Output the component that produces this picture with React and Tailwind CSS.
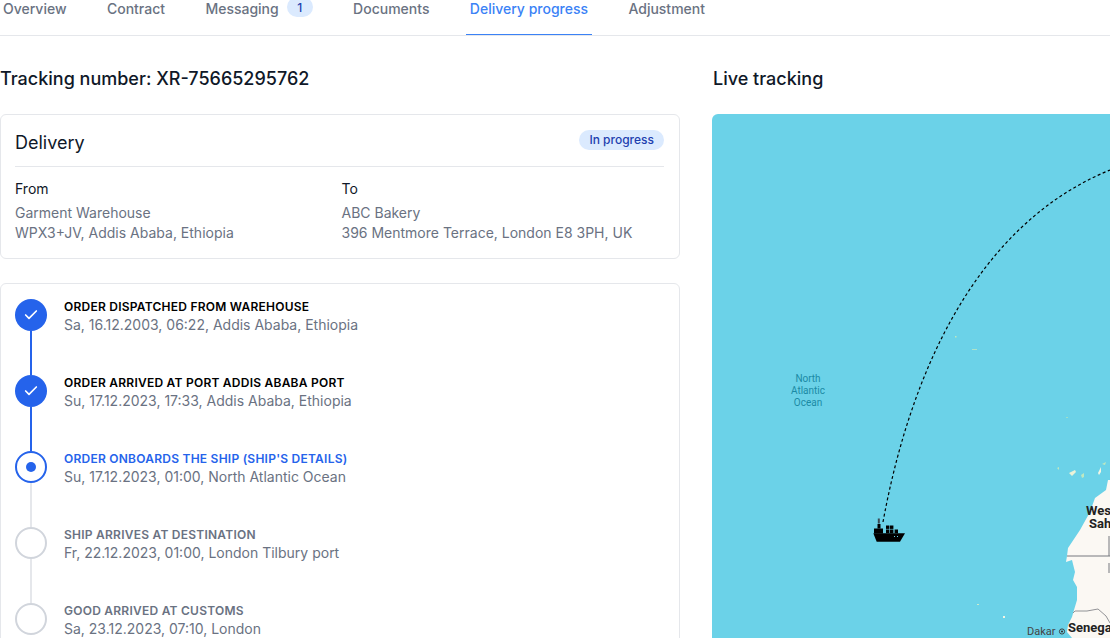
import { Check } from "lucide-react";

const tabs = ["Overview", "Contract", "Messaging", "Documents", "Delivery progress", "Adjustment"];

const steps = [
  { title: "ORDER DISPATCHED FROM WAREHOUSE", sub: "Sa, 16.12.2003, 06:22, Addis Ababa, Ethiopia", state: "done" },
  { title: "ORDER ARRIVED AT PORT ADDIS ABABA PORT", sub: "Su, 17.12.2023, 17:33, Addis Ababa, Ethiopia", state: "done" },
  { title: "ORDER ONBOARDS THE SHIP (SHIP'S DETAILS)", sub: "Su, 17.12.2023, 01:00, North Atlantic Ocean", state: "current" },
  { title: "SHIP ARRIVES AT DESTINATION", sub: "Fr, 22.12.2023, 01:00, London Tilbury port", state: "todo" },
  { title: "GOOD ARRIVED AT CUSTOMS", sub: "Sa, 23.12.2023, 07:10, London", state: "todo" },
];

function Tabs() {
  return (
    <div className="flex h-9 gap-[32.4px] border-b border-gray-200 -ml-px w-[1111px] overflow-hidden">
      {tabs.map((t) => {
        const active = t === "Delivery progress";
        return (
          <div key={t} className={active ? "flex gap-2 px-1 -mt-px h-[37px] border-b-2 border-[#3b82f6] text-sm leading-5 font-medium text-[#3b82f6]" : "flex gap-2 px-1 -mt-px h-[37px] text-sm leading-5 font-medium text-gray-500"}>
            <span>{t}</span>
            {t === "Messaging" && (
              <span className="h-5 rounded-full bg-[#dbeafe] px-[10.5px] text-xs leading-[22px] text-[#1e40af] -mt-0.5">1</span>
            )}
          </div>
        );
      })}
    </div>
  );
}

function StepIcon({ state }) {
  if (state === "done") {
    return (
      <div className="flex size-8 shrink-0 items-center justify-center rounded-full bg-[#2563eb]">
        <Check className="size-4 text-white" strokeWidth={2.5} />
      </div>
    );
  }
  if (state === "current") {
    return (
      <div className="flex size-8 shrink-0 items-center justify-center rounded-full border-2 border-[#2563eb] bg-white">
        <div className="size-2.5 rounded-full bg-[#2563eb]" />
      </div>
    );
  }
  return <div className="size-8 shrink-0 rounded-full border-2 border-gray-300 bg-white" />;
}

function Step({ step, last }) {
  const titleColor = step.state === "done" ? "text-black" : step.state === "current" ? "text-[#2563eb]" : "text-gray-500";
  return (
    <div className="flex h-[76px] gap-[17px]">
      <div className="flex w-8 shrink-0 flex-col items-center">
        <StepIcon state={step.state} />
        {!last && <div className={step.state === "done" ? "w-0.5 flex-1 bg-[#2563eb]" : "w-0.5 flex-1 bg-gray-200"} />}
      </div>
      <div>
        <div className={"text-xs leading-4 font-semibold tracking-[0.02em] " + titleColor}>{step.title}</div>
        <div className="text-sm leading-5 text-gray-500">{step.sub}</div>
      </div>
    </div>
  );
}

function Delivery() {
  return (
    <div className="mt-[21px] h-[145px] rounded-md border border-gray-200 pl-3.5 pr-[15px]">
      <div className="flex h-[52px] items-center justify-between border-b border-gray-200">
        <h3 className="mt-1 text-lg">Delivery</h3>
        <span className="-mt-0.5 rounded-full bg-[#dbeafe] px-2.5 text-xs leading-5 font-medium text-[#1e40af]">In progress</span>
      </div>
      <div className="mt-3 grid grid-cols-[326.5px_1fr] text-sm leading-5">
        <div>
          <div className="mb-1 text-gray-900">From</div>
          <div className="text-gray-500">Garment Warehouse</div>
          <div className="text-gray-500">WPX3+JV, Addis Ababa, Ethiopia</div>
        </div>
        <div>
          <div className="mb-1 text-gray-900">To</div>
          <div className="text-gray-500">ABC Bakery</div>
          <div className="text-gray-500">396 Mentmore Terrace, London E8 3PH, UK</div>
        </div>
      </div>
    </div>
  );
}

function MapArt() {
  return (
    <svg className="absolute inset-0" width="398" height="524" viewBox="712 114 398 524">
      {/* coast */}
      <path d="M1108 480L1106 490L1095 498L1090 512L1080 530L1068 548L1067 556L1066 562L1072 560L1075 572L1073 580L1077 587L1077 600L1074 610L1072 617L1068 625L1067 632L1072 638L1110 638L1110 480Z" fill="#fbf8f3" />
      {/* borders */}
      <path d="M1067 556H1110M1109 536V556M1109 563V573" stroke="#77797e" strokeWidth="1" fill="none" />
      <path d="M1073 613L1075 611L1087 611L1098 609L1106 616L1110 623" stroke="#77797e" strokeWidth="0.8" fill="none" />
      {/* islands */}
      <path d="M1069 473L1075 470L1076 472L1072 476Z" fill="#eaf2d8" />
      <path d="M1081 475L1084 473L1084 477L1082 478Z" fill="#bfe8c0" />
      <path d="M1098 473L1101 467L1101 472L1099 475Z" fill="#f3f5e4" />
      <path d="M1102 464L1106 462L1105 465Z" fill="#bfe8c0" />
      <path d="M1057 468L1059 467L1059 470Z" fill="#bfe8c0" />
      <path d="M1003 616h2v2h-2z" fill="#f3f5e4" />
      <path d="M977 604h2v1h-2z" fill="#cdeccb" />
      <path d="M972 349h5v0.8h-5z" fill="#bfe8c0" />
      <path d="M955 336h1.5v1.5h-1.5z" fill="#bfe8c0" />
      <path d="M1066 417h2v1h-2z" fill="#9fdfc8" />
      {/* route */}
      <path d="M883 522C910 375 975 225 1110 170" fill="none" stroke="#000" strokeWidth="1.2" strokeDasharray="3 2.5" />
      {/* ship */}
      <path d="M873.3 533.3H905L900 541.7H876.7Z" fill="#000" />
      <rect x="874" y="528.5" width="9" height="5" fill="#000" />
      <rect x="877.5" y="524" width="3" height="4.5" fill="#000" />
      <rect x="877.8" y="518.5" width="2" height="5" fill="#3b4a55" />
      <rect x="886" y="525.5" width="3.4" height="3.4" fill="#000" />
      <rect x="890" y="525.5" width="3.4" height="3.4" fill="#000" />
      <rect x="886" y="529.5" width="3.4" height="3.8" fill="#000" />
      <rect x="890" y="529.5" width="3.4" height="3.8" fill="#000" />
      <rect x="894.6" y="529.5" width="3.4" height="3.8" fill="#000" />
      <rect x="894" y="536" width="1" height="1" fill="#6bd2e8" />
      <rect x="897" y="536" width="1" height="1" fill="#6bd2e8" />
      {/* dakar marker */}
      <circle cx="1062" cy="631.5" r="2.6" fill="none" stroke="#333" strokeWidth="0.9" />
      <circle cx="1062" cy="631.5" r="1.1" fill="#333" />
    </svg>
  );
}

function LiveMap() {
  return (
    <div className="relative mt-[21px] h-[524px] w-[398px] overflow-hidden rounded-tl-md bg-[#6bd2e8] font-['Roboto',sans-serif]">
      <MapArt />
      <div className="absolute left-[71px] top-[259px] w-[50px] text-center text-[10px] leading-3 text-[#1b8aa5]">
        North Atlantic Ocean
      </div>
      <div className="absolute left-[374px] top-[390px] text-[13px] leading-[13px] font-bold text-[#222]">
        West
        <br />
        <span className="ml-[3px]">Sahara</span>
      </div>
      <div className="absolute left-[315px] top-[512px] text-[11px] leading-3 text-[#444]">Dakar</div>
      <div className="absolute left-[356px] top-[507px] text-[13px] leading-[14px] font-bold whitespace-nowrap text-[#222]">Senegal</div>
    </div>
  );
}

export default function App() {
  return (
    <div className="h-[638px] w-[1110px] overflow-hidden bg-white font-['Inter',sans-serif] text-gray-900">
      <Tabs />
      <div className="mt-[29px] flex gap-8">
        <div className="w-[680px] shrink-0">
          <h2 className="h-7 text-lg leading-7 font-medium">Tracking number: XR-75665295762</h2>
          <Delivery />
          <div className="mt-6 rounded-md border border-gray-200 px-3.5 pt-[15px]">
            {steps.map((s, i) => (
              <Step key={s.title} step={s} last={i === steps.length - 1} />
            ))}
          </div>
        </div>
        <div className="w-[398px] shrink-0">
          <h2 className="ml-px h-7 text-lg leading-7 font-medium">Live tracking</h2>
          <LiveMap />
        </div>
      </div>
    </div>
  );
}
